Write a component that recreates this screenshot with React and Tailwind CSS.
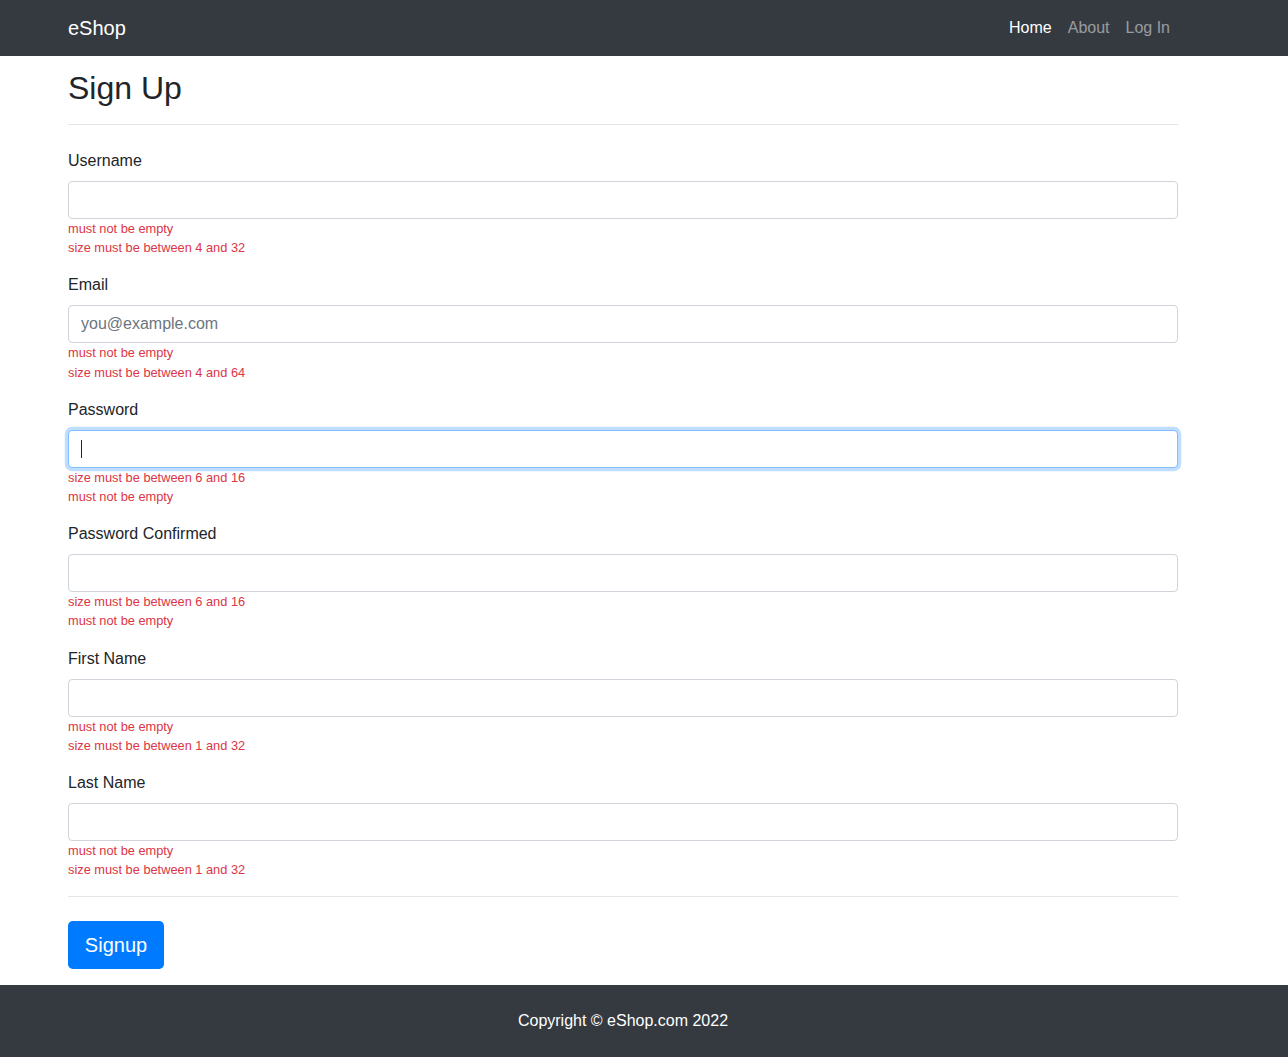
import React from "react";

const fields = [
  { label: "Username", errors: ["must not be empty", "size must be between 4 and 32"] },
  { label: "Email", placeholder: "you@example.com", errors: ["must not be empty", "size must be between 4 and 64"] },
  { label: "Password", focused: true, errors: ["size must be between 6 and 16", "must not be empty"] },
  { label: "Password Confirmed", errors: ["size must be between 6 and 16", "must not be empty"] },
  { label: "First Name", errors: ["must not be empty", "size must be between 1 and 32"] },
  { label: "Last Name", errors: ["must not be empty", "size must be between 1 and 32"] },
];

function Field({ f }) {
  return (
    <div className="mb-4">
      <label className="block mb-2 text-[16px] leading-[24px]">{f.label}</label>
      <div className="relative">
        <input
          type={f.label.startsWith("Password") ? "password" : "text"}
          placeholder={f.placeholder || ""}
          className={
            "block w-full h-[38px] px-3 py-[6px] text-[16px] leading-[24px] rounded-[4px] border bg-white outline-none placeholder:text-[#6c757d] " +
            (f.focused
              ? "border-[#80bdff] shadow-[0_0_0_3.2px_rgba(0,123,255,0.25)]"
              : "border-[#ced4da]")
          }
        />
        {f.focused && (
          <span className="absolute left-[13px] top-[10px] w-px h-[18px] bg-[#212529]" />
        )}
      </div>
      {f.errors.map((e, i) => (
        <div key={i} className="text-[12.8px] leading-[19.2px] text-[#dc3545]">
          {e}
        </div>
      ))}
    </div>
  );
}

export default function App() {
  return (
    <div
      className="min-h-[1057px] flex flex-col bg-white text-[#212529]"
      style={{ fontFamily: '"Liberation Sans", Arial, sans-serif' }}
    >
      <nav className="h-[56px] bg-[#343a40] flex items-center">
        <div className="ml-[68px] w-[1110px] flex items-center justify-between">
          <span className="text-[20px] leading-[30px] text-white">eShop</span>
          <div className="flex text-[16px] leading-[24px]">
            <span className="px-2 text-white">Home</span>
            <span className="px-2 text-white/50">About</span>
            <span className="px-2 text-white/50">Log In</span>
          </div>
        </div>
      </nav>
      <main className="ml-[68px] w-[1110px] pt-[13px]">
        <h2 className="text-[32px] leading-[38.4px] font-normal">Sign Up</h2>
        <hr className="mt-[16.6px] mb-[24px] border-0 border-t border-[rgba(0,0,0,0.1)]" />
        <form>
          {fields.map((f) => (
            <Field key={f.label} f={f} />
          ))}
          <hr className="mt-[17px] mb-[24px] border-0 border-t border-[rgba(0,0,0,0.1)]" />
          <button
            type="button"
            className="h-[48px] w-[96px] text-[20px] leading-[30px] text-white bg-[#007bff] rounded-[4.8px] mb-4"
          >
            Signup
          </button>
        </form>
      </main>
      <footer className="h-[72px] bg-[#343a40] flex items-center">
        <div className="ml-[68px] w-[1110px] text-center text-white text-[16px] leading-[24px]">
          Copyright © eShop.com 2022
        </div>
      </footer>
    </div>
  );
}
